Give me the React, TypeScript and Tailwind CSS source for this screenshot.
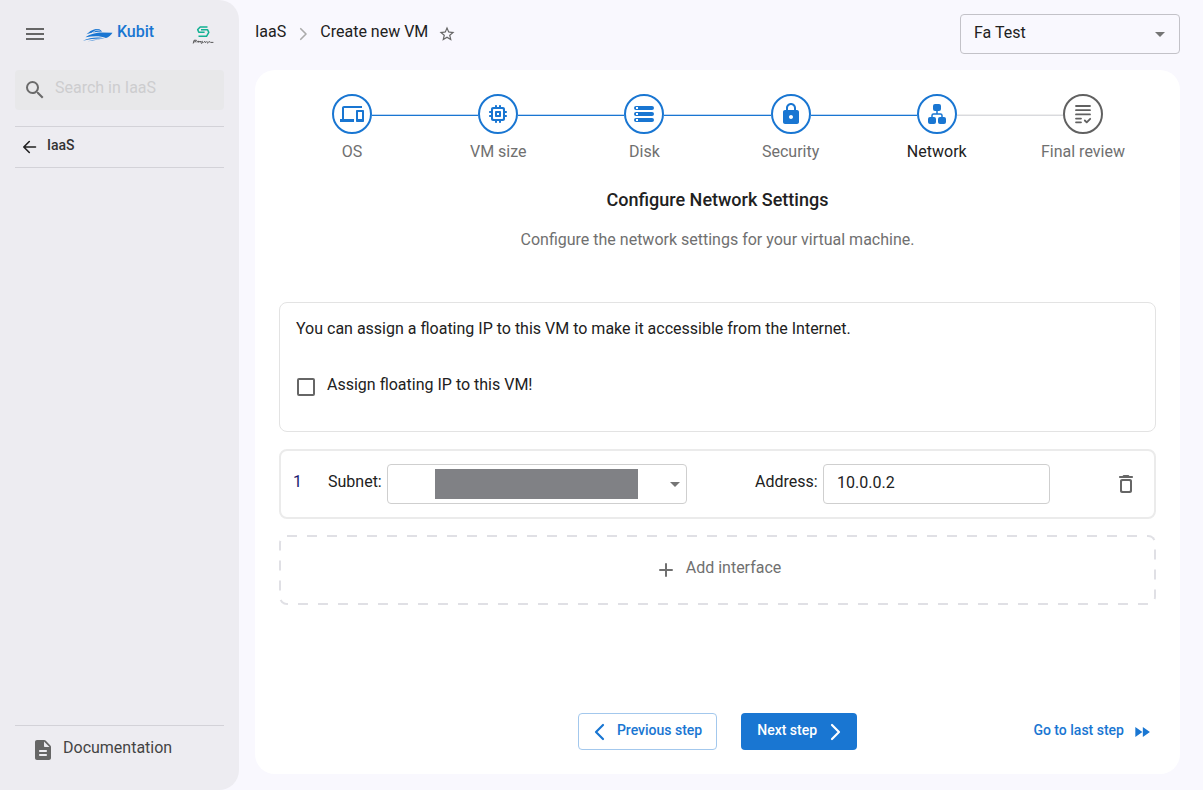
import React from "react";
import {
  MdArrowDropDown,
  MdFastForward,
  MdMenu,
  MdOutlineDevices,
  MdSearch,
  MdStarOutline,
} from "react-icons/md";

type StepState = "done" | "active" | "pending";

interface Step {
  label: string;
  state: StepState;
  icon: React.ReactNode;
}

const steps: Step[] = [
  { label: "OS", state: "done", icon: <MdOutlineDevices className="size-6" /> },
  {
    label: "VM size",
    state: "done",
    icon: (
      <svg viewBox="0 0 24 24" fill="currentColor" className="size-6">
        <path d="M14 9h-4c-.55 0-1 .45-1 1v4c0 .55.45 1 1 1h4c.55 0 1-.45 1-1v-4c0-.55-.45-1-1-1zm-1 4h-2v-2h2v2zm8-3c0-.55-.45-1-1-1h-1V7c0-1.100-.9-2-2-2h-2V4c0-.55-.45-1-1-1s-1 .45-1 1v1h-2V4c0-.55-.45-1-1-1s-1 .45-1 1v1H7c-1.100 0-2 .9-2 2v2H4c-.55 0-1 .45-1 1s.45 1 1 1h1v2H4c-.55 0-1 .45-1 1s.45 1 1 1h1v2c0 1.100.9 2 2 2h2v1c0 .55.45 1 1 1s1-.45 1-1v-1h2v1c0 .55.45 1 1 1s1-.45 1-1v-1h2c1.100 0 2-.9 2-2v-2h1c.55 0 1-.45 1-1s-.45-1-1-1h-1v-2h1c.55 0 1-.45 1-1zm-5 7H8c-.55 0-1-.45-1-1V8c0-.55.45-1 1-1h8c.55 0 1 .45 1 1v8c0 .55-.45 1-1 1z" />
      </svg>
    ),
  },
  {
    label: "Disk",
    state: "done",
    icon: (
      <svg viewBox="0 0 24 24" fill="currentColor" fillRule="evenodd" className="size-6">
        <path d="M4 4h16a2 2 0 0 1 0 4H4a2 2 0 0 1 0-4zm0 1v2h2V5zM4 10h16a2 2 0 0 1 0 4H4a2 2 0 0 1 0-4zm0 1v2h2v-2zM4 16h16a2 2 0 0 1 0 4H4a2 2 0 0 1 0-4zm0 1v2h2v-2z" />
      </svg>
    ),
  },
  {
    label: "Security",
    state: "done",
    icon: (
      <svg viewBox="0 0 24 24" fill="currentColor" className="size-6">
        <path d="M18 8h-1V6c0-2.760-2.240-5-5-5S7 3.240 7 6v2H6c-1.100 0-2 .9-2 2v10c0 1.100.9 2 2 2h12c1.100 0 2-.9 2-2V10c0-1.100-.9-2-2-2zm-6 9c-1.100 0-2-.9-2-2s.9-2 2-2 2 .9 2 2-.9 2-2 2zM9 8V6c0-1.660 1.340-3 3-3s3 1.340 3 3v2H9z" />
      </svg>
    ),
  },
  {
    label: "Network",
    state: "active",
    icon: (
      <svg viewBox="0 0 24 24" fill="currentColor" className="size-6">
        <rect x="8" y="2" width="8" height="7" rx="2" />
        <rect x="3" y="15" width="8" height="7" rx="2" />
        <rect x="13" y="15" width="8" height="7" rx="2" />
        <path d="M12 8v4M7 16v-2.500a1.500 1.500 0 0 1 1.500-1.500h7a1.500 1.500 0 0 1 1.500 1.500V16" fill="none" stroke="currentColor" strokeWidth="1.500" />
      </svg>
    ),
  },
  {
    label: "Final review",
    state: "pending",
    icon: (
      <svg viewBox="0 0 24 24" fill="none" stroke="currentColor" strokeWidth="1.800" strokeLinecap="round" strokeLinejoin="round" className="size-6">
        <path d="M5 4h14M5 8.200h14M5 12.400h14M5 16.600h5M5 20.300h5M13.800 18.500l1.900 1.900 3.500-3.600" />
      </svg>
    ),
  },
];

const lineColors: Record<StepState, string> = {
  done: "border-[#bcd6f2] bg-[#1976d2]",
  active: "border-[#bcd6f2] bg-[#1976d2]",
  pending: "border-[#eeeeee] bg-[#d9dade]",
};

const circleColors: Record<StepState, string> = {
  done: "border-[#1976d2] text-[#1976d2]",
  active: "border-[#1976d2] text-[#1976d2]",
  pending: "border-[#616161] text-[#616161]",
};

function Connector({ state }: { state?: StepState }) {
  return <span className={`mt-px h-0.5 flex-1 ${state ? `border-t ${lineColors[state]}` : ""}`} />;
}

function Stepper() {
  return (
    <ol className="flex">
      {steps.map((step, i) => (
        <li key={step.label} className="flex flex-1 flex-col items-center">
          <div className="flex w-full items-center">
            <Connector state={i > 0 ? step.state : undefined} />
            <span className={`flex size-10 items-center justify-center rounded-full border-2 ${circleColors[step.state]}`}>
              {step.icon}
            </span>
            <Connector state={steps[i + 1]?.state} />
          </div>
          <span className={`mt-1.5 leading-6 ${step.state === "active" ? "text-[#212121]" : "text-[#707070]"}`}>
            {step.label}
          </span>
        </li>
      ))}
    </ol>
  );
}

function YachtLogo() {
  return (
    <svg viewBox="0 0 30 14" fill="#1976d2" className="h-3.5 w-[30px]" aria-hidden="true">
      <path d="M3.500 6.300L7.500 3C10 1.400 13 .8 16.200 1l3 2.500c-5 .1-10.200 1-15.700 2.800z" />
      <path d="M2.500 9.300C6 6.500 14 4.600 18.500 4.600l11 .1c-1.600 2.400-3.700 4.400-6.500 5.300-6-2.300-12.500-2-20.500-.7z" />
      <path d="M0 12.700c7-3.300 16-4.300 21.800-2-7.300-.6-14 .2-21.800 2z" />
      <path d="M4.500 13.400c4.500-1.900 9.500-2.500 13.300-1.600-4.500 0-8.800.6-13.300 1.600z" />
      <path d="M9 4.900l3.800-2.500 4-.2" fill="none" stroke="#edecf1" strokeWidth="0.700" />
    </svg>
  );
}

function PartnerLogo() {
  return (
    <svg viewBox="0 0 22 20" fill="none" className="h-5 w-[22px]" aria-hidden="true">
      <path d="M15.500 2H8.200L5.700 4.600l1.100 2.700h5.800M9 4.700h6.500l1.300 2.600-2.300 4H6.500" stroke="#12b193" strokeWidth="1.500" strokeLinejoin="round" />
      <path d="M1.200 18.500l.8-3.200 2.400-.1-.5 1.500-1.800.2M5 17.500l1.200-1.600.6 1.500 1.400-1.400.6 1.500 1.500-1.200.4 1.300-1.500 1M11.500 17.500l1.300-1.100.5 1.100 1.500-.9M16 16.400l-.4 2.100M16.600 17.400l1.300-.8.7.8h2.800" stroke="#333" strokeWidth="0.800" />
    </svg>
  );
}

function Sidebar() {
  return (
    <aside className="flex w-[239px] shrink-0 flex-col rounded-r-[20px] bg-[#edecf1] px-[15px] pb-[26px]">
      <div className="flex h-[70px] items-center justify-between pr-2.5 pl-2">
        <button aria-label="Toggle menu" className="mt-[-3px] text-[#666]">
          <MdMenu className="size-6" />
        </button>
        <a href="#kubit" className="flex items-center gap-1 pr-0.5 font-medium text-[#1976d2]">
          <YachtLogo />
          <span className="pb-1.5">Kubit</span>
        </a>
        <PartnerLogo />
      </div>

      <label className="flex h-10 items-center gap-2 rounded bg-[#e8e8ea] px-2">
        <MdSearch className="size-6 shrink-0 text-[#6b6b6b]" />
        <input
          type="search"
          aria-label="Search in IaaS"
          placeholder="Search in IaaS"
          className="w-full min-w-0 bg-transparent pb-1 outline-none placeholder:text-[#cdcdcf]"
        />
      </label>

      <nav className="mt-4 flex flex-1 flex-col">
        <a href="#iaas" className="flex h-[42px] items-center gap-2 border-y border-[#d3d2d8] pl-1.5 text-sm font-medium text-[#333]">
          <svg viewBox="0 0 18 18" fill="none" stroke="#212121" strokeWidth="1.600" strokeLinecap="round" strokeLinejoin="round" className="size-[18px]" aria-hidden="true">
            <path d="M14.500 9H3M8.300 3.500L2.800 9l5.500 5.500" />
          </svg>
          <span className="pb-1">IaaS</span>
        </a>
        <a href="#docs" className="mt-auto flex items-center gap-2 border-t border-[#d3d2d8] pt-2.5 pl-4 text-[#444]">
          <svg viewBox="0 0 24 24" fill="#666" className="size-6" aria-hidden="true">
            <path d="M14.590 2.590c-.38-.38-.89-.59-1.420-.59H6c-1.100 0-2 .9-2 2v16c0 1.100.89 2 1.990 2H18c1.100 0 2-.9 2-2V8.830c0-.53-.21-1.040-.59-1.410l-4.820-4.830zM15 18H9c-.55 0-1-.45-1-1s.45-1 1-1h6c.55 0 1 .45 1 1s-.45 1-1 1zm0-4H9c-.55 0-1-.45-1-1s.45-1 1-1h6c.55 0 1 .45 1 1s-.45 1-1 1zm-2-6V3.500L18.500 9H14c-.55 0-1-.45-1-1z" />
          </svg>
          <span className="pb-1">Documentation</span>
        </a>
      </nav>
    </aside>
  );
}

function Chevron({ className, left = false }: { className: string; left?: boolean }) {
  return (
    <svg viewBox="0 0 24 24" fill="none" stroke="currentColor" strokeWidth="2.200" strokeLinecap="round" strokeLinejoin="round" className={className} aria-hidden="true">
      <path d={left ? "M16 5l-7 7 7 7" : "M9 5l7 7-7 7"} />
    </svg>
  );
}

function Header() {
  return (
    <header className="flex h-[70px] items-start justify-between pt-3.5">
      <nav className="flex h-10 items-center text-[#212121]" aria-label="Breadcrumb">
        <a href="#iaas" className="pb-1">IaaS</a>
        <Chevron className="mx-2 size-[18px] text-[#ababab]" />
        <span className="pb-1">Create new VM</span>
        <button aria-label="Add to favourites" className="ml-2.5 text-[#666]">
          <MdStarOutline className="size-[18px]" />
        </button>
      </nav>
      <div className="relative">
        <select aria-label="Project" defaultValue="Fa Test" className="h-10 w-[220px] appearance-none rounded border border-[#c3c2c8] bg-transparent pr-8 pb-0.5 pl-[13px] text-[#212121]">
          <option>Fa Test</option>
        </select>
        <MdArrowDropDown className="pointer-events-none absolute top-2 right-2 size-6 text-[#757575]" />
      </div>
    </header>
  );
}

function InterfaceRow() {
  return (
    <section className="mt-[17px] flex h-[70px] items-center rounded-lg border-2 border-[#ebebeb] pr-4 pl-3 text-[#212121]">
      <span className="w-[35px] pb-1 text-[#1a1a6e]">1</span>
      <label htmlFor="subnet" className="w-[59px] pb-1">Subnet:</label>
      <div className="relative w-[300px]">
        <select id="subnet" className="h-10 w-full appearance-none rounded border border-[#cfcfcf] bg-white px-3">
          <option value="" />
        </select>
        <span className="pointer-events-none absolute inset-y-[5px] right-[49px] left-12 bg-[#808185]" />
        <MdArrowDropDown className="pointer-events-none absolute top-2 right-0 size-6 text-[#757575]" />
      </div>
      <label htmlFor="address" className="ml-[68px] w-[68px] pb-1">Address:</label>
      <input id="address" defaultValue="10.0.0.2" className="h-10 w-[227px] rounded border border-[#cfcfcf] px-[13px] pb-1" />
      <button aria-label="Delete interface" className="ml-auto text-[#666]">
        <svg viewBox="0 0 24 24" fill="currentColor" className="size-6" aria-hidden="true">
          <path d="M6 19c0 1.100.9 2 2 2h8c1.100 0 2-.9 2-2V9c0-1.100-.9-2-2-2H8c-1.100 0-2 .9-2 2v10zM9 9h6c.55 0 1 .45 1 1v8c0 .55-.45 1-1 1H9c-.55 0-1-.45-1-1v-8c0-.55.45-1 1-1zm6.500-5l-.71-.71c-.18-.18-.44-.29-.7-.29H9.910c-.26 0-.52.11-.7.29L8.500 4H6c-.55 0-1 .45-1 1s.45 1 1 1h12c.55 0 1-.45 1-1s-.45-1-1-1h-2.500z" />
        </svg>
      </button>
    </section>
  );
}

export default function App() {
  return (
    <div className="flex min-h-screen bg-[#f9f8fe] font-['Roboto',sans-serif] text-base">
      <Sidebar />
      <main className="flex min-w-0 flex-1 flex-col pr-[23px] pb-4 pl-4">
        <Header />
        <div className="flex flex-1 flex-col rounded-[20px] bg-white p-6">
          <Stepper />
          <div className="mt-6 text-center">
            <h1 className="text-lg leading-6 font-medium text-[#212121]">Configure Network Settings</h1>
            <p className="mt-4 text-[#707070]">Configure the network settings for your virtual machine.</p>
          </div>

          <section className="mt-[50px] h-[130px] rounded-lg border border-[#e3e3e3] px-4 pt-3.5 text-[#212121]">
            <p>You can assign a floating IP to this VM to make it accessible from the Internet.</p>
            <label className="mt-8 flex items-center gap-3">
              <input type="checkbox" className="mt-1 ml-px size-[18px] appearance-none rounded-[2px] border-2 border-[#666] bg-white checked:bg-[#1976d2]" />
              <span>Assign floating IP to this VM!</span>
            </label>
          </section>

          <InterfaceRow />

          <button className="relative mt-4 flex h-[70px] items-center justify-center gap-2 text-[#707070]">
            <svg className="absolute inset-0 size-full overflow-hidden rounded-lg" fill="none" aria-hidden="true">
              <rect width="100%" height="100%" rx="8" stroke="#e0e0e5" strokeWidth="4" strokeDasharray="10 10" />
            </svg>
            <svg viewBox="0 0 24 24" stroke="currentColor" strokeWidth="2" strokeLinecap="round" className="size-6" aria-hidden="true">
              <path d="M12 6v12M6 12h12" />
            </svg>
            <span className="pb-1">Add interface</span>
          </button>

          <footer className="mt-auto grid grid-cols-[1fr_auto_1fr] items-center text-sm font-medium text-[#1976d2]">
            <div />
            <div className="flex gap-6">
              <button className="flex h-[37px] items-center gap-1.5 rounded border border-[#a3c8ed] pr-3.5 pl-2">
                <Chevron left className="size-6" />
                <span className="pb-1">Previous step</span>
              </button>
              <button className="flex h-[37px] items-center gap-1.5 rounded bg-[#1976d2] pr-2.5 pl-4 text-white">
                <span className="pb-1">Next step</span>
                <Chevron className="size-6" />
              </button>
            </div>
            <button className="flex items-center gap-2 justify-self-end pr-1">
              <span className="pb-1">Go to last step</span>
              <MdFastForward className="size-5" />
            </button>
          </footer>
        </div>
      </main>
    </div>
  );
}
